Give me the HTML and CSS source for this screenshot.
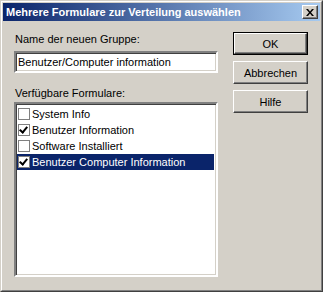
FILE: index.html
```html
<!DOCTYPE html>
<html lang="de">
<head>
    <meta charset="UTF-8">
    <title>Mehrere Formulare zur Verteilung auswählen</title>
    <link rel="stylesheet" href="styles.css">
</head>
<body>
    <div class="window">
        <div class="frame">
            <div class="titlebar">
                <span class="title">Mehrere Formulare zur Verteilung auswählen</span>
                <span class="close">
                    <svg width="8" height="7" viewBox="0 0 8 7">
                        <path d="M0 0h2l2 2.5L6 0h2L5 3.5 8 7H6L4 4.5 2 7H0l3-3.5z" fill="#000"/>
                    </svg>
                </span>
            </div>
            <div class="content">
                <!-- linke Spalte -->
                <div class="left">
                    <div class="label">Name der neuen Gruppe:</div>
                    <div class="input">Benutzer/Computer information</div>
                    <div class="label label-list">Verfügbare Formulare:</div>
                    <div class="listbox">
                        <div class="item"><span class="check"></span>System Info</div>
                        <div class="item"><span class="check checked"></span>Benutzer Information</div>
                        <div class="item"><span class="check"></span>Software Installiert</div>
                        <div class="item selected"><span class="check checked"></span><span class="text">Benutzer Computer Information</span></div>
                    </div>
                </div>
                <!-- Buttons -->
                <div class="buttons">
                    <div class="button default"><span class="inner">OK</span></div>
                    <div class="button"><span class="inner">Abbrechen</span></div>
                    <div class="button"><span class="inner">Hilfe</span></div>
                </div>
            </div>
        </div>
    </div>
</body>
</html>
```
FILE: styles.css
```css
body {
    margin: 0;
    font-family: "Liberation Sans", Arial, sans-serif;
    font-size: 11px;
    color: #000;
}
.window {
    width: 323px;
    height: 292px;
    box-sizing: border-box;
    border: 1px solid;
    border-color: #d4d0c8 #404040 #404040 #d4d0c8;
    background-color: #d4d0c8;
}
.frame {
    height: 100%;
    box-sizing: border-box;
    border: 1px solid;
    border-color: #fff #808080 #808080 #fff;
    padding: 1px;
}
.titlebar {
    height: 18px;
    display: flex;
    align-items: center;
    justify-content: space-between;
    background: linear-gradient(to right, #0a246a, #a6caf0);
    padding: 0 2px 0 3px;
}
.title {
    color: #fff;
    font-weight: bold;
    font-size: 11px;
}
.close {
    width: 16px;
    height: 14px;
    box-sizing: border-box;
    display: flex;
    align-items: center;
    justify-content: center;
    background-color: #d4d0c8;
    border: 1px solid;
    border-color: #fff #404040 #404040 #fff;
    box-shadow: inset -1px -1px 0 #808080;
}
.content {
    display: flex;
    padding: 11px 0 0 11px;
}
.left {
    width: 204px;
    display: flex;
    flex-direction: column;
}
.label {
    line-height: 13px;
    margin-top: 1px;
    padding-left: 1px;
}
.label-list {
    margin-top: 14px;
}
.input {
    margin-top: 5px;
    height: 22px;
    box-sizing: border-box;
    border: 2px solid;
    border-color: #808080 #fff #fff #808080;
    box-shadow: inset 1px 1px 0 #404040, inset -1px -1px 0 #d4d0c8;
    background-color: #fff;
    line-height: 18px;
    padding-left: 2px;
}
.listbox {
    margin-top: 2px;
    height: 175px;
    box-sizing: border-box;
    border: 2px solid;
    border-color: #808080 #fff #fff #808080;
    box-shadow: inset 1px 1px 0 #404040, inset -1px -1px 0 #d4d0c8;
    background-color: #fff;
    padding: 2px 2px 0 1px;
}
.item {
    height: 16px;
    display: flex;
    align-items: center;
    line-height: 16px;
}
.check {
    width: 12px;
    height: 12px;
    box-sizing: border-box;
    border: 1px solid #808080;
    background-color: #fff;
    margin: 0 2px 0 1px;
    position: relative;
}
.check.checked::after {
    content: "";
    position: absolute;
    left: 2px;
    top: 0;
    width: 3px;
    height: 6px;
    border: solid #000;
    border-width: 0 2px 2px 0;
    transform: rotate(40deg);
}
.item.selected {
    background-color: #0a246a;
    color: #fff;
}
.buttons {
    margin-left: 15px;
    display: flex;
    flex-direction: column;
    gap: 6px;
}
.button {
    width: 75px;
    height: 23px;
    box-sizing: border-box;
    border: 1px solid;
    border-color: #fff #404040 #404040 #fff;
    box-shadow: inset -1px -1px 0 #808080;
    display: flex;
    align-items: center;
    justify-content: center;
}
.button.default {
    border: 1px solid #000;
    box-shadow: none;
}
.button.default .inner {
    width: 100%;
    height: 100%;
    box-sizing: border-box;
    border: 1px solid;
    border-color: #fff #404040 #404040 #fff;
    box-shadow: inset -1px -1px 0 #808080;
    display: flex;
    align-items: center;
    justify-content: center;
}
```
